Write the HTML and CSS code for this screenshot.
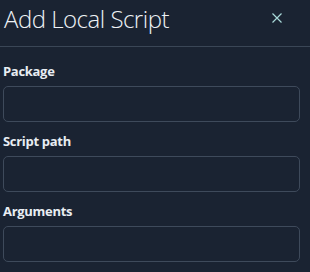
FILE: index.html
```html
<!DOCTYPE html>
<html lang="en">
<head>
  <meta charset="UTF-8">
  <title>Add Local Script</title>
  <link rel="stylesheet" href="styles.css">
</head>
<body>

  <div class="dialog">
    <div class="dialog-header">
      <h2 class="dialog-title">Add Local Script</h2>
      <button class="close-btn" type="button" aria-label="Close">
        <svg width="10" height="10" viewBox="0 0 10 10">
          <path d="M0.5 0.5 L9.5 9.5 M9.5 0.5 L0.5 9.5" stroke="currentColor" stroke-width="1.2" fill="none"/>
        </svg>
      </button>
    </div>

    <form class="script-form">
      <div class="field">
        <label for="package">Package</label>
        <input type="text" id="package">
      </div>
      <div class="field">
        <label for="path">Script path</label>
        <input type="text" id="path">
      </div>
      <div class="field">
        <label for="args">Arguments</label>
        <input type="text" id="args">
      </div>
    </form>
  </div>

</body>
</html>
```

FILE: styles.css
```css
body {
  margin: 0;
  background-color: #1a2332;
  font-family: "Open Sans", "Noto Sans", sans-serif;
  color: #e8edf2;
}
.dialog-header {
  display: flex;
  justify-content: space-between;
  align-items: flex-start;
  height: 46px;
  border-bottom: 1px solid #3a4656;
}
.dialog-title {
  margin: 3px 0 0 4px;
  font-size: 24px;
  line-height: 32px;
  font-weight: 300;
  letter-spacing: -0.5px;
  color: #eef2f6;
}
.close-btn {
  background: none;
  border: none;
  color: #a8d8d8;
  margin: 13px 28px 0 0;
  padding: 0;
  line-height: 0;
  cursor: pointer;
}
.script-form {
  padding: 15px 10px 0 3px;
}
.field {
  display: flex;
  flex-direction: column;
  margin-bottom: 10px;
}
.field label {
  font-size: 13px;
  font-weight: 700;
  line-height: 18px;
  letter-spacing: -0.3px;
  margin-bottom: 6px;
}
.field input {
  height: 36px;
  box-sizing: border-box;
  background: transparent;
  border: 1px solid #3e4a5b;
  border-radius: 5px;
  color: #e8edf2;
  padding: 0 8px;
}
```
